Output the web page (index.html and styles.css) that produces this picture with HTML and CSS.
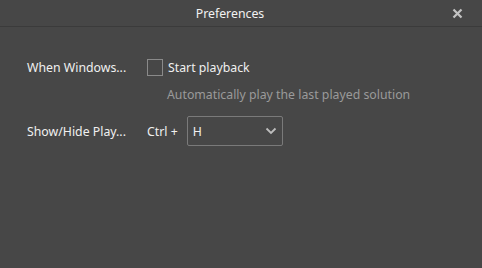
FILE: index.html
```html
<!DOCTYPE html>
<html lang="en">

<head>
    <meta charset="UTF-8">
    <title>Preferences</title>
    <link rel="stylesheet" href="styles.css">
</head>

<body>
    <div class="dialog">
        <div class="title-bar">
            <span class="title">Preferences</span>
            <span class="close">
                <svg width="11" height="11" viewBox="0 0 11 11">
                    <path d="M1.5 1.5 L9.5 9.5 M9.5 1.5 L1.5 9.5" stroke="#c4c4c4" stroke-width="2.2" />
                </svg>
            </span>
        </div>

        <div class="content">
            <div class="row">
                <div class="label">When Windows...</div>
                <div class="field">
                    <label class="check">
                        <span class="box"></span>
                        <span>Start playback</span>
                    </label>
                    <div class="hint">Automatically play the last played solution</div>
                </div>
            </div>

            <div class="row row-hotkey">
                <div class="label">Show/Hide Play...</div>
                <div class="field field-inline">
                    <span class="ctrl">Ctrl +</span>
                    <div class="select">
                        <span>H</span>
                        <svg width="12" height="8" viewBox="0 0 12 8">
                            <path d="M1.5 1.5 L6 6 L10.5 1.5" fill="none" stroke="#bdbdbd" stroke-width="1.8" />
                        </svg>
                    </div>
                </div>
            </div>
        </div>
    </div>
</body>

</html>
```
FILE: styles.css
```css
body {
    margin: 0;
    padding: 0;
    background-color: #474747;
    font-family: "Noto Sans", "Open Sans", sans-serif;
    font-size: 12.3px;
    color: #f0f0f0;
}

.dialog {
    width: 482px;
    height: 268px;
}

.title-bar {
    position: relative;
    height: 26px;
    border-bottom: 1px solid #3b3b3b;
    display: flex;
    justify-content: center;
    align-items: center;
    padding-right: 22px;
}

.title {
    color: #f2f2f2;
}

.close {
    position: absolute;
    right: 19px;
    top: 8px;
    line-height: 0;
}

.content {
    padding: 32px 0 0 27px;
}

.row {
    display: flex;
}

.label {
    width: 120px;
    line-height: 17px;
}

.field {
    display: flex;
    flex-direction: column;
}

.check {
    display: flex;
    align-items: center;
    gap: 5px;
    line-height: 17px;
}

.box {
    width: 14px;
    height: 15px;
    border: 1px solid #8a8a8a;
}

.hint {
    margin-top: 10px;
    margin-left: 20px;
    color: #9a9a9a;
}

.row-hotkey {
    margin-top: 13px;
    align-items: center;
}

.field-inline {
    flex-direction: row;
    align-items: center;
}

.ctrl {
    margin-right: 9px;
}

.select {
    width: 84px;
    height: 28px;
    border: 1px solid #7a7a7a;
    border-radius: 2px;
    display: flex;
    align-items: center;
    justify-content: space-between;
    padding: 0 5px 0 5px;
}
```
